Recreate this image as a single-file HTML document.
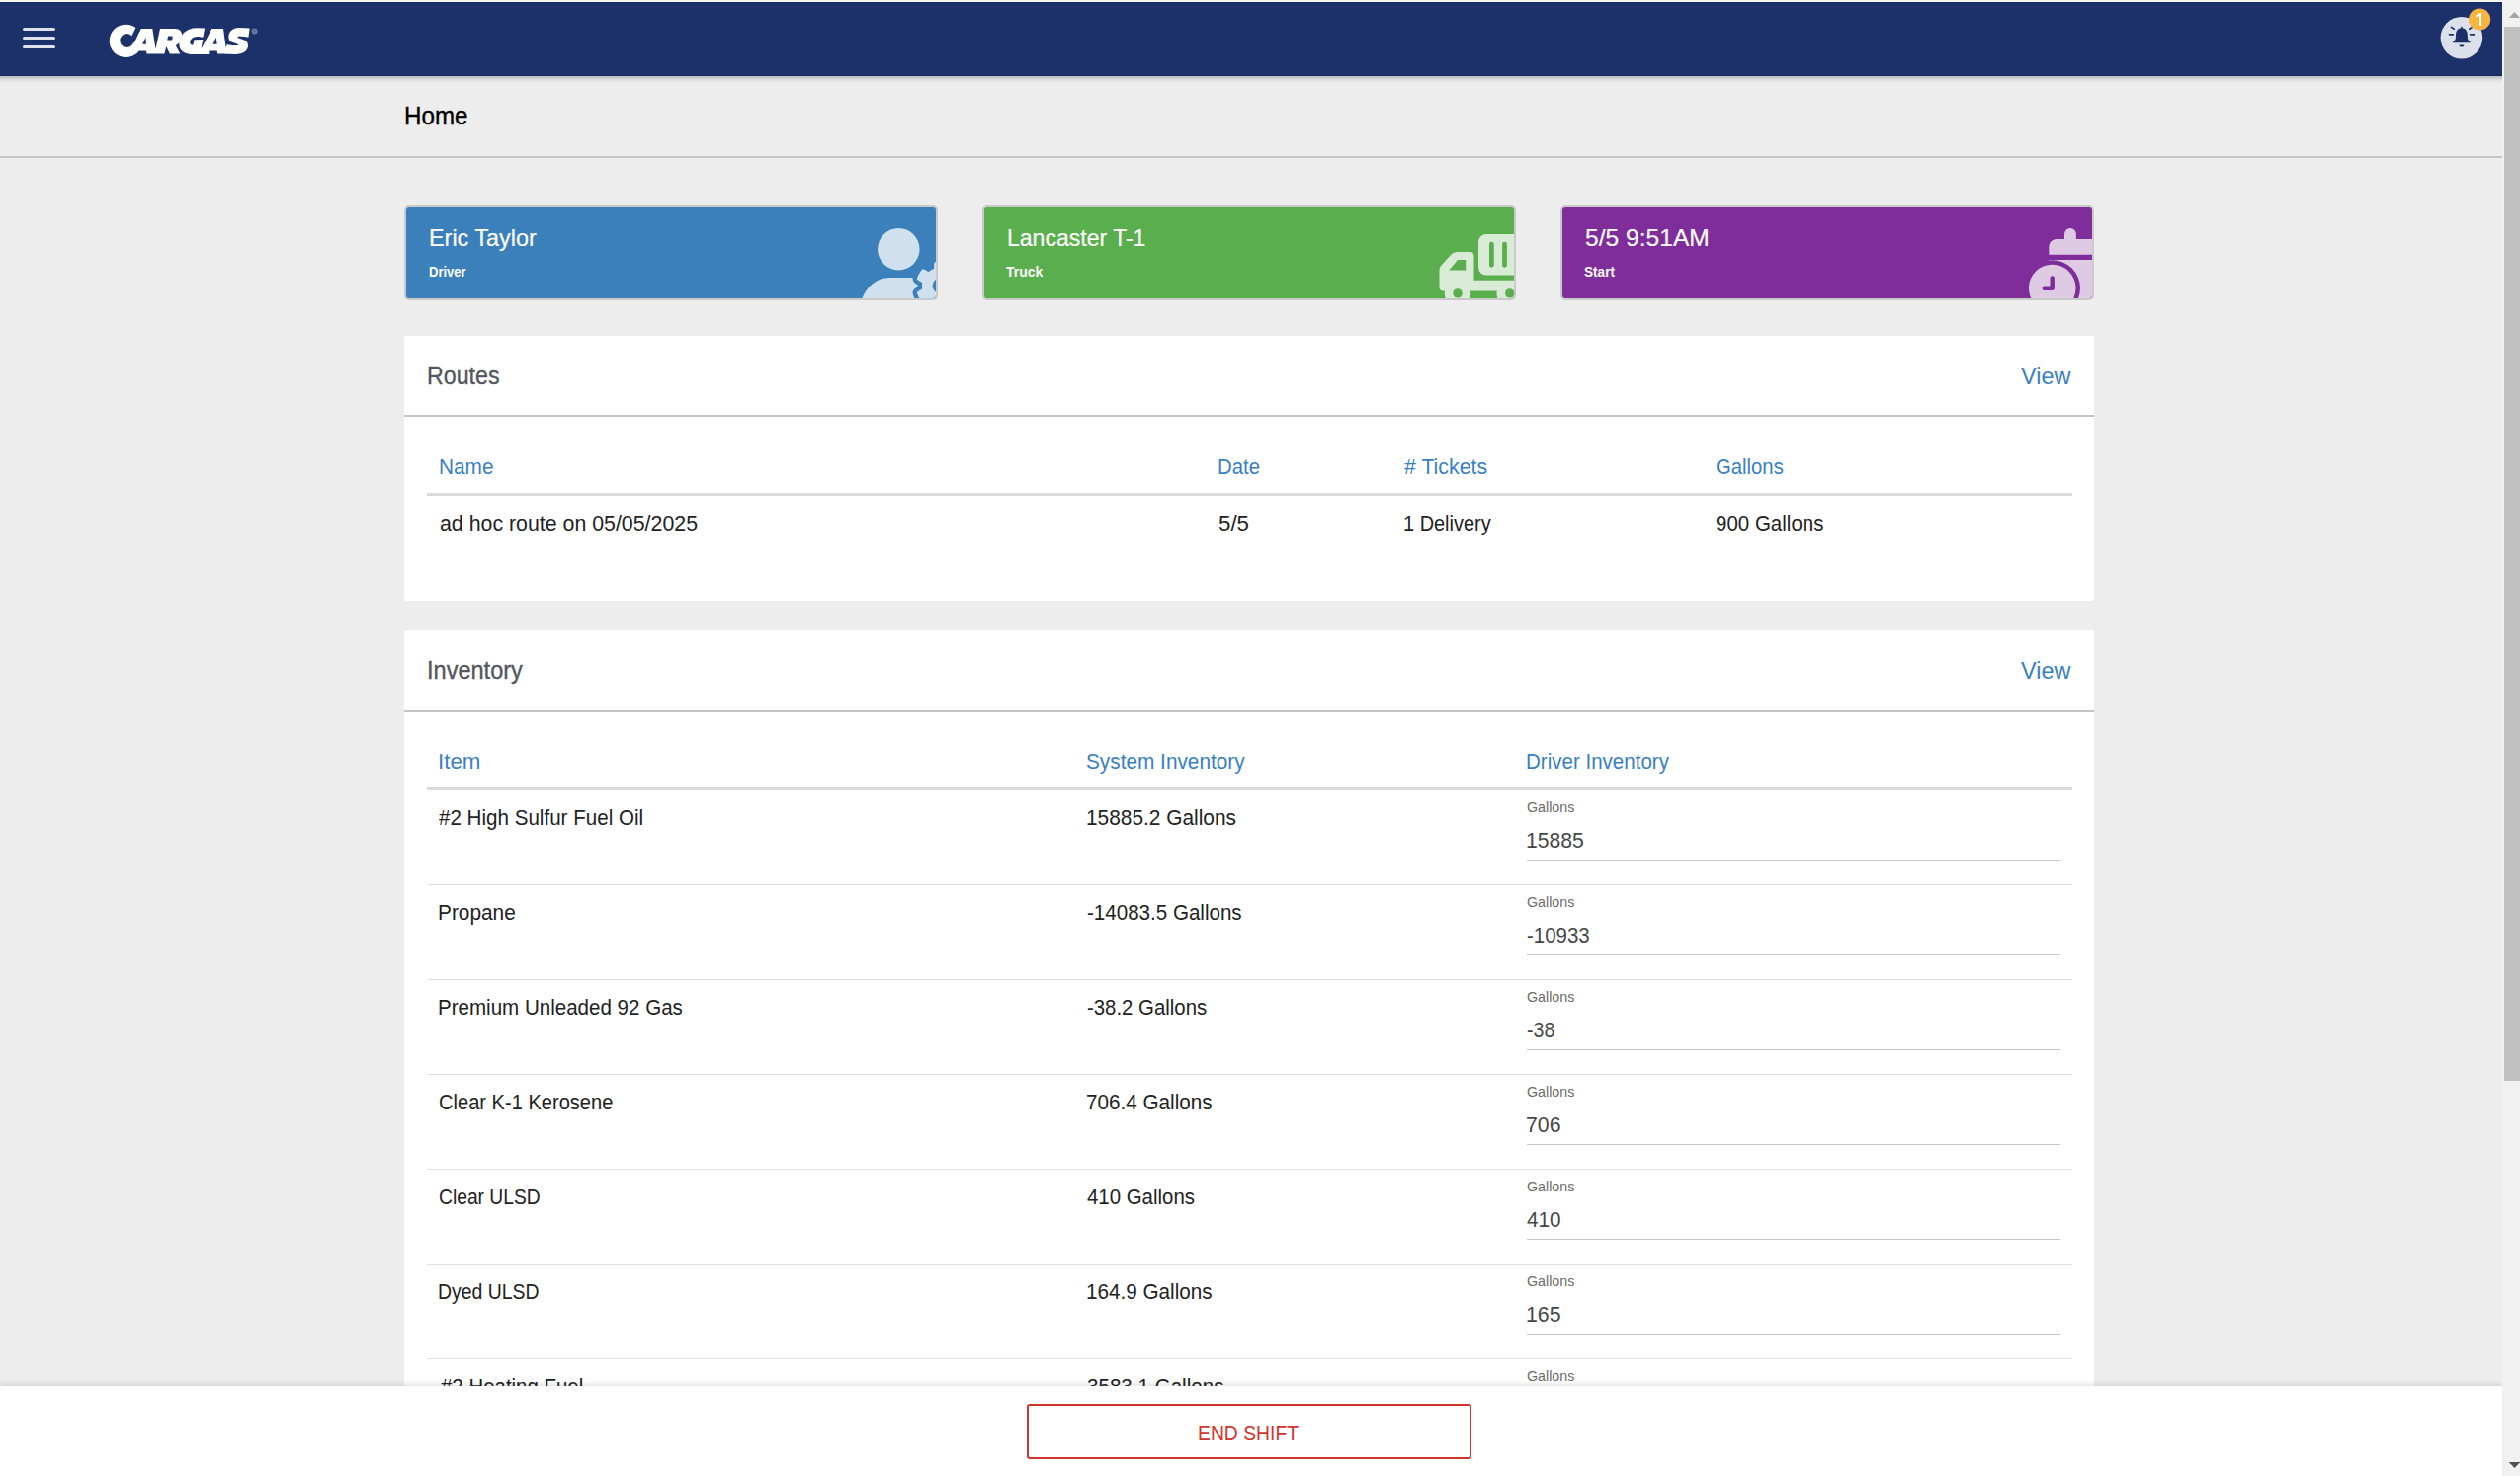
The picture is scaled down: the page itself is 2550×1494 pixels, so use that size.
<!DOCTYPE html>
<html><head><meta charset="utf-8"><title>Home</title>
<style>
html,body{margin:0;padding:0;width:2550px;height:1494px;overflow:hidden;}
body{background:#ededed;font-family:"Liberation Sans",sans-serif;}
#root{position:relative;width:2550px;height:1494px;overflow:hidden;background:#ededed;}
.a{position:absolute;}
.t{position:absolute;white-space:nowrap;line-height:1;transform-origin:0 0;}
.med{-webkit-text-stroke:0.35px currentColor;}
.lato{-webkit-text-stroke:0.2px currentColor;}
</style></head><body><div id="root">
<div class="a" style="left:-30px;top:2px;width:2592px;height:75px;background:#1c3169;box-shadow:0 2px 5px rgba(0,0,0,0.28);z-index:4"></div><div class="a" style="left:0;top:0;width:2532px;height:1px;background:#f2f2f2;z-index:6"></div><div class="a" style="left:0;top:1px;width:2532px;height:1px;background:#fefefe;z-index:6"></div><div class="a" style="left:0;top:2px;width:2532px;height:75px;background:#1c3169;z-index:5"><div class="a" style="left:0;top:0;width:2532px;height:1px;background:#132a66"></div><div class="a" style="left:0;top:74px;width:2532px;height:1px;background:#132a66"></div><div class="a" style="left:23px;top:26px;width:33px;height:3.4px;border-radius:2px;background:#dde1ea"></div><div class="a" style="left:23px;top:35px;width:33px;height:3.4px;border-radius:2px;background:#dde1ea"></div><div class="a" style="left:23px;top:44px;width:33px;height:3.4px;border-radius:2px;background:#dde1ea"></div><svg class="a" style="left:105px;top:16px" width="160" height="48" viewBox="105 18 160 48">
<g fill="#fff">
<circle cx="127.4" cy="41.4" r="16.7"/>
<path d="M135.6 44.1 L142.6 28.9 L154.3 28.9 L157.5 49.5 L162 28.9 L177 28.9 C182 29 184.2 32 184.2 36 C184.2 40.5 181.5 44 177.8 46 L182.3 54.6 L171.8 54.6 L168.3 47 L166.4 54.6 L148.6 54.6 L148 51.4 L139.7 51.4 Z"/>
<path d="M199 28.25 L207.1 28.6 L205.4 37.8 C203 37.2 201 37 199.5 37 C195 37 192.3 40 192.3 43 C192.3 44.8 193.3 45.7 195.2 45.7 L196.5 40.3 L205.4 40 L203.6 48.6 L212.5 49.5 L211.4 51.4 L211.4 54.9 L194 54.9 C186 54.9 181.3 50.5 181.3 44.5 C181.3 35 189 28.25 199 28.25 Z"/>
<path d="M203.5 49.8 L214.3 28.9 L226 28.9 L229.5 54.6 L220.3 54.6 L219.7 51.4 L211.4 51.4 Z"/>
<path d="M242 28.1 L252.7 28.6 L251.4 37.8 C248 36.8 244 36.6 241.3 36.8 C240 37 240 38 241.5 38.5 L246 40 C249.5 41.2 251 43 251 46 C251 51.5 246 54.9 238 54.9 L227.6 54.6 L228 49.5 L229.8 45 C233 46 237 46.2 240.6 46 C241.5 45.5 241 44.6 239.5 44.2 L235 42.8 C232.5 42 231.4 40.2 231.4 37.6 C231.4 31.5 236 28.1 242 28.1 Z"/>
</g>
<g fill="#1c3169">
<circle cx="128.3" cy="41.1" r="7"/>
<path d="M133.4 36.2 L137.8 27.3 L143 20 L142.6 28.9 L135.6 44.1 L134.8 41.5 Z"/>
<path d="M144.2 44.8 L147.4 37.8 L148 44.8 Z"/>
<path d="M170 36.5 L174 36.5 C175 36.5 175 38.8 173.8 40.6 L169.3 40.6 Z"/>
<path d="M215.6 44.8 L218.6 37.8 L219.7 44.8 Z"/>
</g>
<circle cx="257.6" cy="31.4" r="3" fill="#6a7aa3"/><circle cx="257.6" cy="31.4" r="1.3" fill="#56668f"/>
</svg><svg class="a" style="left:2460px;top:0px" width="72" height="75" viewBox="2460 2 72 75">
<circle cx="2490.9" cy="38.2" r="21.3" fill="#dbe0ea"/>
<path d="M2490.9 28.3 C2487.2 28.3 2485.2 31.2 2485 35 L2484.8 39 C2484.6 40 2484 40.8 2482.4 42 C2481.6 42.6 2482 43.3 2482.8 43.3 L2499 43.3 C2499.8 43.3 2500.2 42.6 2499.4 42 C2497.8 40.8 2497.2 40 2497 39 L2496.8 35 C2496.6 31.2 2494.6 28.3 2490.9 28.3 Z" fill="#1c3169"/>
<path d="M2488.4 45.4 h5 a2.5 2.2 0 0 1 -5 0z" fill="#1c3169"/>
<rect x="2490" y="26.8" width="1.8" height="2.6" rx="0.9" fill="#1c3169"/>
<g stroke="#1c3169" stroke-width="1.7" stroke-linecap="round">
<line x1="2478.5" y1="34.8" x2="2482.3" y2="34.8"/><line x1="2499.7" y1="34.8" x2="2503.5" y2="34.8"/>
<line x1="2480.4" y1="27.4" x2="2483.2" y2="29.2"/><line x1="2501.6" y1="27.4" x2="2498.8" y2="29.2"/>
</g>
<circle cx="2509.1" cy="19.5" r="11.1" fill="#f6b53e"/>
<path d="M2509.1 13.3 H2511 V25.9 H2509.1 V15.9 L2505.2 17.2 V15.5 Z" fill="#fff"/>
</svg></div><div class="a" style="left:2532px;top:0;width:18px;height:1494px;background:#f1f1f1;z-index:10"></div><div class="a" style="left:2534px;top:27px;width:16px;height:1067px;background:#c1c1c1;z-index:11"></div><svg class="a" style="left:2532px;top:0;z-index:12" width="18" height="1494" viewBox="2532 0 18 1494">
<path d="M2538.8 18 L2544.4 12 L2550 18 Z" fill="#a3a3a3"/>
<path d="M2538.7 1480 L2550.3 1480 L2544.5 1486 Z" fill="#505050"/>
</svg><div class="a" style="left:0;top:158px;width:2532px;height:2px;background:#c4c4c4"></div><div class="a" style="left:409px;top:208px;width:536px;height:92px;border:2px solid #c9c9c9;border-radius:5px;background:#3b80bb;overflow:hidden"><svg class="a" style="left:0;top:0" width="536" height="92" viewBox="411 210 536 92">
<circle cx="909.3" cy="252.2" r="21.2" fill="#cfe0ee"/>
<path d="M871 306 C875 292 886 281.1 900 281.1 L921 281.1 C930 281.1 935 290 935 306 Z" fill="#cfe0ee"/>
<path d="M969.80 289.25 L969.80 289.41 L969.80 289.57 L969.79 289.73 L969.79 289.89 L969.78 290.05 L969.77 290.21 L969.77 290.37 L969.76 290.53 L969.74 290.69 L969.73 290.85 L969.72 291.01 L969.70 291.17 L969.68 291.33 L969.66 291.49 L969.64 291.65 L969.62 291.81 L969.60 291.97 L969.57 292.13 L969.62 292.30 L969.78 292.49 L970.05 292.71 L970.41 292.95 L970.84 293.21 L971.32 293.48 L971.83 293.78 L972.35 294.09 L972.87 294.40 L973.37 294.73 L973.82 295.05 L974.23 295.37 L974.55 295.67 L974.79 295.96 L974.92 296.22 L974.93 296.44 L974.86 296.65 L974.80 296.85 L974.73 297.06 L974.66 297.26 L974.59 297.46 L974.52 297.66 L974.44 297.87 L974.37 298.07 L974.29 298.27 L974.21 298.47 L974.13 298.66 L974.04 298.86 L973.96 299.06 L973.87 299.26 L973.79 299.45 L973.70 299.65 L973.60 299.84 L973.51 300.03 L973.42 300.23 L973.32 300.42 L973.22 300.61 L973.12 300.80 L973.02 300.99 L972.92 301.18 L972.81 301.36 L972.70 301.55 L972.60 301.74 L972.49 301.92 L972.37 302.10 L972.26 302.29 L972.15 302.47 L972.03 302.65 L971.91 302.83 L971.79 303.01 L971.67 303.18 L971.55 303.36 L971.43 303.54 L971.30 303.71 L971.17 303.88 L971.05 304.05 L970.92 304.23 L970.79 304.40 L970.65 304.56 L970.52 304.73 L970.38 304.90 L970.24 305.06 L970.11 305.23 L969.97 305.39 L969.82 305.55 L969.68 305.71 L969.54 305.87 L969.39 306.03 L969.19 306.14 L968.90 306.15 L968.54 306.09 L968.11 305.96 L967.63 305.77 L967.13 305.53 L966.60 305.26 L966.06 304.97 L965.53 304.68 L965.02 304.38 L964.55 304.11 L964.11 303.87 L963.72 303.68 L963.40 303.55 L963.15 303.50 L962.98 303.55 L962.85 303.65 L962.73 303.75 L962.60 303.85 L962.47 303.94 L962.34 304.04 L962.22 304.14 L962.08 304.23 L961.95 304.32 L961.82 304.41 L961.69 304.50 L961.56 304.59 L961.42 304.68 L961.29 304.77 L961.15 304.85 L961.01 304.94 L960.88 305.02 L960.74 305.10 L960.60 305.18 L960.46 305.26 L960.32 305.34 L960.18 305.42 L960.04 305.50 L959.90 305.57 L959.75 305.64 L959.61 305.72 L959.47 305.79 L959.32 305.86 L959.18 305.93 L959.03 305.99 L958.88 306.06 L958.74 306.12 L958.59 306.19 L958.44 306.25 L958.29 306.31 L958.14 306.37 L957.99 306.43 L957.87 306.55 L957.78 306.79 L957.73 307.13 L957.71 307.56 L957.69 308.06 L957.69 308.62 L957.69 309.20 L957.69 309.81 L957.67 310.42 L957.64 311.01 L957.59 311.57 L957.52 312.08 L957.42 312.51 L957.29 312.86 L957.13 313.10 L956.93 313.22 L956.72 313.27 L956.51 313.31 L956.30 313.36 L956.09 313.40 L955.88 313.44 L955.67 313.48 L955.46 313.51 L955.25 313.55 L955.04 313.58 L954.82 313.61 L954.61 313.64 L954.40 313.67 L954.18 313.69 L953.97 313.72 L953.76 313.74 L953.54 313.76 L953.33 313.77 L953.12 313.79 L952.90 313.80 L952.69 313.82 L952.47 313.83 L952.26 313.84 L952.04 313.84 L951.83 313.85 L951.61 313.85 L951.40 313.85 L951.19 313.85 L950.97 313.85 L950.76 313.84 L950.54 313.84 L950.33 313.83 L950.11 313.82 L949.90 313.80 L949.68 313.79 L949.47 313.77 L949.26 313.76 L949.04 313.74 L948.83 313.72 L948.62 313.69 L948.40 313.67 L948.19 313.64 L947.98 313.61 L947.76 313.58 L947.55 313.55 L947.34 313.51 L947.13 313.48 L946.92 313.44 L946.71 313.40 L946.50 313.36 L946.29 313.31 L946.08 313.27 L945.87 313.22 L945.67 313.10 L945.51 312.86 L945.38 312.51 L945.28 312.08 L945.21 311.57 L945.16 311.01 L945.13 310.42 L945.11 309.81 L945.11 309.20 L945.11 308.62 L945.11 308.06 L945.09 307.56 L945.07 307.13 L945.02 306.79 L944.93 306.55 L944.81 306.43 L944.66 306.37 L944.51 306.31 L944.36 306.25 L944.21 306.19 L944.06 306.12 L943.92 306.06 L943.77 305.99 L943.62 305.93 L943.48 305.86 L943.33 305.79 L943.19 305.72 L943.05 305.64 L942.90 305.57 L942.76 305.50 L942.62 305.42 L942.48 305.34 L942.34 305.26 L942.20 305.18 L942.06 305.10 L941.92 305.02 L941.79 304.94 L941.65 304.85 L941.51 304.77 L941.38 304.68 L941.24 304.59 L941.11 304.50 L940.98 304.41 L940.85 304.32 L940.72 304.23 L940.58 304.14 L940.46 304.04 L940.33 303.94 L940.20 303.85 L940.07 303.75 L939.95 303.65 L939.82 303.55 L939.65 303.50 L939.40 303.55 L939.08 303.68 L938.69 303.87 L938.25 304.11 L937.78 304.38 L937.27 304.68 L936.74 304.97 L936.20 305.26 L935.67 305.53 L935.17 305.77 L934.69 305.96 L934.26 306.09 L933.90 306.15 L933.61 306.14 L933.41 306.03 L933.26 305.87 L933.12 305.71 L932.98 305.55 L932.83 305.39 L932.69 305.23 L932.56 305.06 L932.42 304.90 L932.28 304.73 L932.15 304.56 L932.01 304.40 L931.88 304.23 L931.75 304.05 L931.63 303.88 L931.50 303.71 L931.37 303.54 L931.25 303.36 L931.13 303.18 L931.01 303.01 L930.89 302.83 L930.77 302.65 L930.65 302.47 L930.54 302.29 L930.43 302.10 L930.31 301.92 L930.20 301.74 L930.10 301.55 L929.99 301.36 L929.88 301.18 L929.78 300.99 L929.68 300.80 L929.58 300.61 L929.48 300.42 L929.38 300.23 L929.29 300.03 L929.20 299.84 L929.10 299.65 L929.01 299.45 L928.93 299.26 L928.84 299.06 L928.76 298.86 L928.67 298.66 L928.59 298.47 L928.51 298.27 L928.43 298.07 L928.36 297.87 L928.28 297.66 L928.21 297.46 L928.14 297.26 L928.07 297.06 L928.00 296.85 L927.94 296.65 L927.87 296.44 L927.88 296.22 L928.01 295.96 L928.25 295.67 L928.57 295.37 L928.98 295.05 L929.43 294.73 L929.93 294.40 L930.45 294.09 L930.97 293.78 L931.48 293.48 L931.96 293.21 L932.39 292.95 L932.75 292.71 L933.02 292.49 L933.18 292.30 L933.23 292.13 L933.20 291.97 L933.18 291.81 L933.16 291.65 L933.14 291.49 L933.12 291.33 L933.10 291.17 L933.08 291.01 L933.07 290.85 L933.06 290.69 L933.04 290.53 L933.03 290.37 L933.03 290.21 L933.02 290.05 L933.01 289.89 L933.01 289.73 L933.00 289.57 L933.00 289.41 L933.00 289.25 L933.00 289.09 L933.00 288.93 L933.01 288.77 L933.01 288.61 L933.02 288.45 L933.03 288.29 L933.03 288.13 L933.04 287.97 L933.06 287.81 L933.07 287.65 L933.08 287.49 L933.10 287.33 L933.12 287.17 L933.14 287.01 L933.16 286.85 L933.18 286.69 L933.20 286.53 L933.23 286.37 L933.18 286.20 L933.02 286.01 L932.75 285.79 L932.39 285.55 L931.96 285.29 L931.48 285.02 L930.97 284.72 L930.45 284.41 L929.93 284.10 L929.43 283.77 L928.98 283.45 L928.57 283.13 L928.25 282.83 L928.01 282.54 L927.88 282.28 L927.87 282.06 L927.94 281.85 L928.00 281.65 L928.07 281.44 L928.14 281.24 L928.21 281.04 L928.28 280.84 L928.36 280.63 L928.43 280.43 L928.51 280.23 L928.59 280.03 L928.67 279.84 L928.76 279.64 L928.84 279.44 L928.93 279.24 L929.01 279.05 L929.10 278.85 L929.20 278.66 L929.29 278.47 L929.38 278.27 L929.48 278.08 L929.58 277.89 L929.68 277.70 L929.78 277.51 L929.88 277.32 L929.99 277.14 L930.10 276.95 L930.20 276.76 L930.31 276.58 L930.43 276.40 L930.54 276.21 L930.65 276.03 L930.77 275.85 L930.89 275.67 L931.01 275.49 L931.13 275.32 L931.25 275.14 L931.37 274.96 L931.50 274.79 L931.63 274.62 L931.75 274.45 L931.88 274.27 L932.01 274.10 L932.15 273.94 L932.28 273.77 L932.42 273.60 L932.56 273.44 L932.69 273.27 L932.83 273.11 L932.98 272.95 L933.12 272.79 L933.26 272.63 L933.41 272.47 L933.61 272.36 L933.90 272.35 L934.26 272.41 L934.69 272.54 L935.17 272.73 L935.67 272.97 L936.20 273.24 L936.74 273.53 L937.27 273.82 L937.78 274.12 L938.25 274.39 L938.69 274.63 L939.08 274.82 L939.40 274.95 L939.65 275.00 L939.82 274.95 L939.95 274.85 L940.07 274.75 L940.20 274.65 L940.33 274.56 L940.46 274.46 L940.58 274.36 L940.72 274.27 L940.85 274.18 L940.98 274.09 L941.11 274.00 L941.24 273.91 L941.38 273.82 L941.51 273.73 L941.65 273.65 L941.79 273.56 L941.92 273.48 L942.06 273.40 L942.20 273.32 L942.34 273.24 L942.48 273.16 L942.62 273.08 L942.76 273.00 L942.90 272.93 L943.05 272.86 L943.19 272.78 L943.33 272.71 L943.48 272.64 L943.62 272.57 L943.77 272.51 L943.92 272.44 L944.06 272.38 L944.21 272.31 L944.36 272.25 L944.51 272.19 L944.66 272.13 L944.81 272.07 L944.93 271.95 L945.02 271.71 L945.07 271.37 L945.09 270.94 L945.11 270.44 L945.11 269.88 L945.11 269.30 L945.11 268.69 L945.13 268.08 L945.16 267.49 L945.21 266.93 L945.28 266.42 L945.38 265.99 L945.51 265.64 L945.67 265.40 L945.87 265.28 L946.08 265.23 L946.29 265.19 L946.50 265.14 L946.71 265.10 L946.92 265.06 L947.13 265.02 L947.34 264.99 L947.55 264.95 L947.76 264.92 L947.98 264.89 L948.19 264.86 L948.40 264.83 L948.62 264.81 L948.83 264.78 L949.04 264.76 L949.26 264.74 L949.47 264.73 L949.68 264.71 L949.90 264.70 L950.11 264.68 L950.33 264.67 L950.54 264.66 L950.76 264.66 L950.97 264.65 L951.19 264.65 L951.40 264.65 L951.61 264.65 L951.83 264.65 L952.04 264.66 L952.26 264.66 L952.47 264.67 L952.69 264.68 L952.90 264.70 L953.12 264.71 L953.33 264.73 L953.54 264.74 L953.76 264.76 L953.97 264.78 L954.18 264.81 L954.40 264.83 L954.61 264.86 L954.82 264.89 L955.04 264.92 L955.25 264.95 L955.46 264.99 L955.67 265.02 L955.88 265.06 L956.09 265.10 L956.30 265.14 L956.51 265.19 L956.72 265.23 L956.93 265.28 L957.13 265.40 L957.29 265.64 L957.42 265.99 L957.52 266.42 L957.59 266.93 L957.64 267.49 L957.67 268.08 L957.69 268.69 L957.69 269.30 L957.69 269.88 L957.69 270.44 L957.71 270.94 L957.73 271.37 L957.78 271.71 L957.87 271.95 L957.99 272.07 L958.14 272.13 L958.29 272.19 L958.44 272.25 L958.59 272.31 L958.74 272.38 L958.88 272.44 L959.03 272.51 L959.18 272.57 L959.32 272.64 L959.47 272.71 L959.61 272.78 L959.75 272.86 L959.90 272.93 L960.04 273.00 L960.18 273.08 L960.32 273.16 L960.46 273.24 L960.60 273.32 L960.74 273.40 L960.88 273.48 L961.01 273.56 L961.15 273.65 L961.29 273.73 L961.42 273.82 L961.56 273.91 L961.69 274.00 L961.82 274.09 L961.95 274.18 L962.08 274.27 L962.22 274.36 L962.34 274.46 L962.47 274.56 L962.60 274.65 L962.73 274.75 L962.85 274.85 L962.98 274.95 L963.15 275.00 L963.40 274.95 L963.72 274.82 L964.11 274.63 L964.55 274.39 L965.02 274.12 L965.53 273.82 L966.06 273.53 L966.60 273.24 L967.13 272.97 L967.63 272.73 L968.11 272.54 L968.54 272.41 L968.90 272.35 L969.19 272.36 L969.39 272.47 L969.54 272.63 L969.68 272.79 L969.82 272.95 L969.97 273.11 L970.11 273.27 L970.24 273.44 L970.38 273.60 L970.52 273.77 L970.65 273.94 L970.79 274.10 L970.92 274.27 L971.05 274.45 L971.17 274.62 L971.30 274.79 L971.43 274.96 L971.55 275.14 L971.67 275.32 L971.79 275.49 L971.91 275.67 L972.03 275.85 L972.15 276.03 L972.26 276.21 L972.37 276.40 L972.49 276.58 L972.60 276.76 L972.70 276.95 L972.81 277.14 L972.92 277.32 L973.02 277.51 L973.12 277.70 L973.22 277.89 L973.32 278.08 L973.42 278.27 L973.51 278.47 L973.60 278.66 L973.70 278.85 L973.79 279.05 L973.87 279.24 L973.96 279.44 L974.04 279.64 L974.13 279.84 L974.21 280.03 L974.29 280.23 L974.37 280.43 L974.44 280.63 L974.52 280.84 L974.59 281.04 L974.66 281.24 L974.73 281.44 L974.80 281.65 L974.86 281.85 L974.93 282.06 L974.92 282.28 L974.79 282.54 L974.55 282.83 L974.23 283.13 L973.82 283.45 L973.37 283.77 L972.87 284.10 L972.35 284.41 L971.83 284.72 L971.32 285.02 L970.84 285.29 L970.41 285.55 L970.05 285.79 L969.78 286.01 L969.62 286.20 L969.57 286.37 L969.60 286.53 L969.62 286.69 L969.64 286.85 L969.66 287.01 L969.68 287.17 L969.70 287.33 L969.72 287.49 L969.73 287.65 L969.74 287.81 L969.76 287.97 L969.77 288.13 L969.77 288.29 L969.78 288.45 L969.79 288.61 L969.79 288.77 L969.80 288.93 L969.80 289.09 Z" fill="#3b80bb" stroke="#3b80bb" stroke-width="8.6" stroke-linejoin="round"/>
<path d="M969.80 289.25 L969.80 289.41 L969.80 289.57 L969.79 289.73 L969.79 289.89 L969.78 290.05 L969.77 290.21 L969.77 290.37 L969.76 290.53 L969.74 290.69 L969.73 290.85 L969.72 291.01 L969.70 291.17 L969.68 291.33 L969.66 291.49 L969.64 291.65 L969.62 291.81 L969.60 291.97 L969.57 292.13 L969.62 292.30 L969.78 292.49 L970.05 292.71 L970.41 292.95 L970.84 293.21 L971.32 293.48 L971.83 293.78 L972.35 294.09 L972.87 294.40 L973.37 294.73 L973.82 295.05 L974.23 295.37 L974.55 295.67 L974.79 295.96 L974.92 296.22 L974.93 296.44 L974.86 296.65 L974.80 296.85 L974.73 297.06 L974.66 297.26 L974.59 297.46 L974.52 297.66 L974.44 297.87 L974.37 298.07 L974.29 298.27 L974.21 298.47 L974.13 298.66 L974.04 298.86 L973.96 299.06 L973.87 299.26 L973.79 299.45 L973.70 299.65 L973.60 299.84 L973.51 300.03 L973.42 300.23 L973.32 300.42 L973.22 300.61 L973.12 300.80 L973.02 300.99 L972.92 301.18 L972.81 301.36 L972.70 301.55 L972.60 301.74 L972.49 301.92 L972.37 302.10 L972.26 302.29 L972.15 302.47 L972.03 302.65 L971.91 302.83 L971.79 303.01 L971.67 303.18 L971.55 303.36 L971.43 303.54 L971.30 303.71 L971.17 303.88 L971.05 304.05 L970.92 304.23 L970.79 304.40 L970.65 304.56 L970.52 304.73 L970.38 304.90 L970.24 305.06 L970.11 305.23 L969.97 305.39 L969.82 305.55 L969.68 305.71 L969.54 305.87 L969.39 306.03 L969.19 306.14 L968.90 306.15 L968.54 306.09 L968.11 305.96 L967.63 305.77 L967.13 305.53 L966.60 305.26 L966.06 304.97 L965.53 304.68 L965.02 304.38 L964.55 304.11 L964.11 303.87 L963.72 303.68 L963.40 303.55 L963.15 303.50 L962.98 303.55 L962.85 303.65 L962.73 303.75 L962.60 303.85 L962.47 303.94 L962.34 304.04 L962.22 304.14 L962.08 304.23 L961.95 304.32 L961.82 304.41 L961.69 304.50 L961.56 304.59 L961.42 304.68 L961.29 304.77 L961.15 304.85 L961.01 304.94 L960.88 305.02 L960.74 305.10 L960.60 305.18 L960.46 305.26 L960.32 305.34 L960.18 305.42 L960.04 305.50 L959.90 305.57 L959.75 305.64 L959.61 305.72 L959.47 305.79 L959.32 305.86 L959.18 305.93 L959.03 305.99 L958.88 306.06 L958.74 306.12 L958.59 306.19 L958.44 306.25 L958.29 306.31 L958.14 306.37 L957.99 306.43 L957.87 306.55 L957.78 306.79 L957.73 307.13 L957.71 307.56 L957.69 308.06 L957.69 308.62 L957.69 309.20 L957.69 309.81 L957.67 310.42 L957.64 311.01 L957.59 311.57 L957.52 312.08 L957.42 312.51 L957.29 312.86 L957.13 313.10 L956.93 313.22 L956.72 313.27 L956.51 313.31 L956.30 313.36 L956.09 313.40 L955.88 313.44 L955.67 313.48 L955.46 313.51 L955.25 313.55 L955.04 313.58 L954.82 313.61 L954.61 313.64 L954.40 313.67 L954.18 313.69 L953.97 313.72 L953.76 313.74 L953.54 313.76 L953.33 313.77 L953.12 313.79 L952.90 313.80 L952.69 313.82 L952.47 313.83 L952.26 313.84 L952.04 313.84 L951.83 313.85 L951.61 313.85 L951.40 313.85 L951.19 313.85 L950.97 313.85 L950.76 313.84 L950.54 313.84 L950.33 313.83 L950.11 313.82 L949.90 313.80 L949.68 313.79 L949.47 313.77 L949.26 313.76 L949.04 313.74 L948.83 313.72 L948.62 313.69 L948.40 313.67 L948.19 313.64 L947.98 313.61 L947.76 313.58 L947.55 313.55 L947.34 313.51 L947.13 313.48 L946.92 313.44 L946.71 313.40 L946.50 313.36 L946.29 313.31 L946.08 313.27 L945.87 313.22 L945.67 313.10 L945.51 312.86 L945.38 312.51 L945.28 312.08 L945.21 311.57 L945.16 311.01 L945.13 310.42 L945.11 309.81 L945.11 309.20 L945.11 308.62 L945.11 308.06 L945.09 307.56 L945.07 307.13 L945.02 306.79 L944.93 306.55 L944.81 306.43 L944.66 306.37 L944.51 306.31 L944.36 306.25 L944.21 306.19 L944.06 306.12 L943.92 306.06 L943.77 305.99 L943.62 305.93 L943.48 305.86 L943.33 305.79 L943.19 305.72 L943.05 305.64 L942.90 305.57 L942.76 305.50 L942.62 305.42 L942.48 305.34 L942.34 305.26 L942.20 305.18 L942.06 305.10 L941.92 305.02 L941.79 304.94 L941.65 304.85 L941.51 304.77 L941.38 304.68 L941.24 304.59 L941.11 304.50 L940.98 304.41 L940.85 304.32 L940.72 304.23 L940.58 304.14 L940.46 304.04 L940.33 303.94 L940.20 303.85 L940.07 303.75 L939.95 303.65 L939.82 303.55 L939.65 303.50 L939.40 303.55 L939.08 303.68 L938.69 303.87 L938.25 304.11 L937.78 304.38 L937.27 304.68 L936.74 304.97 L936.20 305.26 L935.67 305.53 L935.17 305.77 L934.69 305.96 L934.26 306.09 L933.90 306.15 L933.61 306.14 L933.41 306.03 L933.26 305.87 L933.12 305.71 L932.98 305.55 L932.83 305.39 L932.69 305.23 L932.56 305.06 L932.42 304.90 L932.28 304.73 L932.15 304.56 L932.01 304.40 L931.88 304.23 L931.75 304.05 L931.63 303.88 L931.50 303.71 L931.37 303.54 L931.25 303.36 L931.13 303.18 L931.01 303.01 L930.89 302.83 L930.77 302.65 L930.65 302.47 L930.54 302.29 L930.43 302.10 L930.31 301.92 L930.20 301.74 L930.10 301.55 L929.99 301.36 L929.88 301.18 L929.78 300.99 L929.68 300.80 L929.58 300.61 L929.48 300.42 L929.38 300.23 L929.29 300.03 L929.20 299.84 L929.10 299.65 L929.01 299.45 L928.93 299.26 L928.84 299.06 L928.76 298.86 L928.67 298.66 L928.59 298.47 L928.51 298.27 L928.43 298.07 L928.36 297.87 L928.28 297.66 L928.21 297.46 L928.14 297.26 L928.07 297.06 L928.00 296.85 L927.94 296.65 L927.87 296.44 L927.88 296.22 L928.01 295.96 L928.25 295.67 L928.57 295.37 L928.98 295.05 L929.43 294.73 L929.93 294.40 L930.45 294.09 L930.97 293.78 L931.48 293.48 L931.96 293.21 L932.39 292.95 L932.75 292.71 L933.02 292.49 L933.18 292.30 L933.23 292.13 L933.20 291.97 L933.18 291.81 L933.16 291.65 L933.14 291.49 L933.12 291.33 L933.10 291.17 L933.08 291.01 L933.07 290.85 L933.06 290.69 L933.04 290.53 L933.03 290.37 L933.03 290.21 L933.02 290.05 L933.01 289.89 L933.01 289.73 L933.00 289.57 L933.00 289.41 L933.00 289.25 L933.00 289.09 L933.00 288.93 L933.01 288.77 L933.01 288.61 L933.02 288.45 L933.03 288.29 L933.03 288.13 L933.04 287.97 L933.06 287.81 L933.07 287.65 L933.08 287.49 L933.10 287.33 L933.12 287.17 L933.14 287.01 L933.16 286.85 L933.18 286.69 L933.20 286.53 L933.23 286.37 L933.18 286.20 L933.02 286.01 L932.75 285.79 L932.39 285.55 L931.96 285.29 L931.48 285.02 L930.97 284.72 L930.45 284.41 L929.93 284.10 L929.43 283.77 L928.98 283.45 L928.57 283.13 L928.25 282.83 L928.01 282.54 L927.88 282.28 L927.87 282.06 L927.94 281.85 L928.00 281.65 L928.07 281.44 L928.14 281.24 L928.21 281.04 L928.28 280.84 L928.36 280.63 L928.43 280.43 L928.51 280.23 L928.59 280.03 L928.67 279.84 L928.76 279.64 L928.84 279.44 L928.93 279.24 L929.01 279.05 L929.10 278.85 L929.20 278.66 L929.29 278.47 L929.38 278.27 L929.48 278.08 L929.58 277.89 L929.68 277.70 L929.78 277.51 L929.88 277.32 L929.99 277.14 L930.10 276.95 L930.20 276.76 L930.31 276.58 L930.43 276.40 L930.54 276.21 L930.65 276.03 L930.77 275.85 L930.89 275.67 L931.01 275.49 L931.13 275.32 L931.25 275.14 L931.37 274.96 L931.50 274.79 L931.63 274.62 L931.75 274.45 L931.88 274.27 L932.01 274.10 L932.15 273.94 L932.28 273.77 L932.42 273.60 L932.56 273.44 L932.69 273.27 L932.83 273.11 L932.98 272.95 L933.12 272.79 L933.26 272.63 L933.41 272.47 L933.61 272.36 L933.90 272.35 L934.26 272.41 L934.69 272.54 L935.17 272.73 L935.67 272.97 L936.20 273.24 L936.74 273.53 L937.27 273.82 L937.78 274.12 L938.25 274.39 L938.69 274.63 L939.08 274.82 L939.40 274.95 L939.65 275.00 L939.82 274.95 L939.95 274.85 L940.07 274.75 L940.20 274.65 L940.33 274.56 L940.46 274.46 L940.58 274.36 L940.72 274.27 L940.85 274.18 L940.98 274.09 L941.11 274.00 L941.24 273.91 L941.38 273.82 L941.51 273.73 L941.65 273.65 L941.79 273.56 L941.92 273.48 L942.06 273.40 L942.20 273.32 L942.34 273.24 L942.48 273.16 L942.62 273.08 L942.76 273.00 L942.90 272.93 L943.05 272.86 L943.19 272.78 L943.33 272.71 L943.48 272.64 L943.62 272.57 L943.77 272.51 L943.92 272.44 L944.06 272.38 L944.21 272.31 L944.36 272.25 L944.51 272.19 L944.66 272.13 L944.81 272.07 L944.93 271.95 L945.02 271.71 L945.07 271.37 L945.09 270.94 L945.11 270.44 L945.11 269.88 L945.11 269.30 L945.11 268.69 L945.13 268.08 L945.16 267.49 L945.21 266.93 L945.28 266.42 L945.38 265.99 L945.51 265.64 L945.67 265.40 L945.87 265.28 L946.08 265.23 L946.29 265.19 L946.50 265.14 L946.71 265.10 L946.92 265.06 L947.13 265.02 L947.34 264.99 L947.55 264.95 L947.76 264.92 L947.98 264.89 L948.19 264.86 L948.40 264.83 L948.62 264.81 L948.83 264.78 L949.04 264.76 L949.26 264.74 L949.47 264.73 L949.68 264.71 L949.90 264.70 L950.11 264.68 L950.33 264.67 L950.54 264.66 L950.76 264.66 L950.97 264.65 L951.19 264.65 L951.40 264.65 L951.61 264.65 L951.83 264.65 L952.04 264.66 L952.26 264.66 L952.47 264.67 L952.69 264.68 L952.90 264.70 L953.12 264.71 L953.33 264.73 L953.54 264.74 L953.76 264.76 L953.97 264.78 L954.18 264.81 L954.40 264.83 L954.61 264.86 L954.82 264.89 L955.04 264.92 L955.25 264.95 L955.46 264.99 L955.67 265.02 L955.88 265.06 L956.09 265.10 L956.30 265.14 L956.51 265.19 L956.72 265.23 L956.93 265.28 L957.13 265.40 L957.29 265.64 L957.42 265.99 L957.52 266.42 L957.59 266.93 L957.64 267.49 L957.67 268.08 L957.69 268.69 L957.69 269.30 L957.69 269.88 L957.69 270.44 L957.71 270.94 L957.73 271.37 L957.78 271.71 L957.87 271.95 L957.99 272.07 L958.14 272.13 L958.29 272.19 L958.44 272.25 L958.59 272.31 L958.74 272.38 L958.88 272.44 L959.03 272.51 L959.18 272.57 L959.32 272.64 L959.47 272.71 L959.61 272.78 L959.75 272.86 L959.90 272.93 L960.04 273.00 L960.18 273.08 L960.32 273.16 L960.46 273.24 L960.60 273.32 L960.74 273.40 L960.88 273.48 L961.01 273.56 L961.15 273.65 L961.29 273.73 L961.42 273.82 L961.56 273.91 L961.69 274.00 L961.82 274.09 L961.95 274.18 L962.08 274.27 L962.22 274.36 L962.34 274.46 L962.47 274.56 L962.60 274.65 L962.73 274.75 L962.85 274.85 L962.98 274.95 L963.15 275.00 L963.40 274.95 L963.72 274.82 L964.11 274.63 L964.55 274.39 L965.02 274.12 L965.53 273.82 L966.06 273.53 L966.60 273.24 L967.13 272.97 L967.63 272.73 L968.11 272.54 L968.54 272.41 L968.90 272.35 L969.19 272.36 L969.39 272.47 L969.54 272.63 L969.68 272.79 L969.82 272.95 L969.97 273.11 L970.11 273.27 L970.24 273.44 L970.38 273.60 L970.52 273.77 L970.65 273.94 L970.79 274.10 L970.92 274.27 L971.05 274.45 L971.17 274.62 L971.30 274.79 L971.43 274.96 L971.55 275.14 L971.67 275.32 L971.79 275.49 L971.91 275.67 L972.03 275.85 L972.15 276.03 L972.26 276.21 L972.37 276.40 L972.49 276.58 L972.60 276.76 L972.70 276.95 L972.81 277.14 L972.92 277.32 L973.02 277.51 L973.12 277.70 L973.22 277.89 L973.32 278.08 L973.42 278.27 L973.51 278.47 L973.60 278.66 L973.70 278.85 L973.79 279.05 L973.87 279.24 L973.96 279.44 L974.04 279.64 L974.13 279.84 L974.21 280.03 L974.29 280.23 L974.37 280.43 L974.44 280.63 L974.52 280.84 L974.59 281.04 L974.66 281.24 L974.73 281.44 L974.80 281.65 L974.86 281.85 L974.93 282.06 L974.92 282.28 L974.79 282.54 L974.55 282.83 L974.23 283.13 L973.82 283.45 L973.37 283.77 L972.87 284.10 L972.35 284.41 L971.83 284.72 L971.32 285.02 L970.84 285.29 L970.41 285.55 L970.05 285.79 L969.78 286.01 L969.62 286.20 L969.57 286.37 L969.60 286.53 L969.62 286.69 L969.64 286.85 L969.66 287.01 L969.68 287.17 L969.70 287.33 L969.72 287.49 L969.73 287.65 L969.74 287.81 L969.76 287.97 L969.77 288.13 L969.77 288.29 L969.78 288.45 L969.79 288.61 L969.79 288.77 L969.80 288.93 L969.80 289.09 Z" fill="#cfe0ee"/>
<circle cx="951.4" cy="289.25" r="7.8" fill="#3b80bb"/>
</svg></div><div class="a" style="left:994px;top:208px;width:536px;height:92px;border:2px solid #c9c9c9;border-radius:5px;background:#5bae4e;overflow:hidden"><svg class="a" style="left:0;top:0" width="536" height="92" viewBox="996 210 536 92">
<path d="M1496 245 a8 8 0 0 1 8 -8 h40 v41.6 h-40 a8 8 0 0 1 -8 -8z" fill="#d8ebd5"/>
<rect x="1507" y="244.7" width="4.8" height="26" rx="2.4" fill="#5bae4e"/>
<rect x="1520.1" y="244.7" width="4.8" height="26" rx="2.4" fill="#5bae4e"/>
<path d="M1460.5 294.6 a4 4 0 0 1 -4 -4 V273 a6 6 0 0 1 1.6 -4 L1468 258 a9 9 0 0 1 6.5 -2.9 h13 a4 4 0 0 1 4 4 V283.8 H1540 V294.6 Z" fill="#d8ebd5"/>
<path d="M1466.2 273.4 L1475.1 263 H1483.2 V273.4 Z" fill="#5bae4e"/>
<circle cx="1475" cy="296.9" r="13.2" fill="#d8ebd5"/>
<circle cx="1475" cy="296.9" r="4.7" fill="#5bae4e"/>
<circle cx="1527.7" cy="296.9" r="13.2" fill="#d8ebd5"/>
<circle cx="1527.7" cy="296.9" r="4.7" fill="#5bae4e"/>
</svg></div><div class="a" style="left:1579px;top:208px;width:536px;height:92px;border:2px solid #c9c9c9;border-radius:5px;background:#7f2d9a;overflow:hidden"><svg class="a" style="left:0;top:0" width="536" height="92" viewBox="1581 210 536 92">
<path d="M2073.3 250 a8 8 0 0 1 8 -8 h40 v15.7 h-48z" fill="#dfcae4"/>
<rect x="2089" y="230.9" width="11.9" height="18" rx="5.95" fill="#dfcae4"/>
<rect x="2073.3" y="263" width="50" height="40" fill="#dfcae4"/>
<circle cx="2076.7" cy="291.6" r="28.3" fill="#7f2d9a"/>
<circle cx="2076.7" cy="291.6" r="23.8" fill="#dfcae4"/>
<path d="M2076.7 281.5 V291.7 H2068.8" fill="none" stroke="#7f2d9a" stroke-width="4.5" stroke-linecap="round" stroke-linejoin="round"/>
</svg></div><div class="a" style="left:409px;top:340px;width:1710px;height:268px;background:#fff;border-radius:3px"></div><div class="a" style="left:409px;top:420px;width:1710px;height:2px;background:#c4c4c4"></div><div class="a" style="left:432px;top:499px;width:1665px;height:3px;background:#dadada"></div><div class="a" style="left:409px;top:638px;width:1710px;height:900px;background:#fff;border-radius:3px"></div><div class="a" style="left:409px;top:719px;width:1710px;height:2px;background:#c4c4c4"></div><div class="a" style="left:432px;top:797px;width:1665px;height:3px;background:#dadada"></div><div class="a" style="left:1545px;top:870px;width:540px;height:1px;background:#c8c8c8"></div><div class="a" style="left:432px;top:895px;width:1665px;height:1px;background:#e0e0e0"></div><div class="a" style="left:1545px;top:966px;width:540px;height:1px;background:#c8c8c8"></div><div class="a" style="left:432px;top:991px;width:1665px;height:1px;background:#e0e0e0"></div><div class="a" style="left:1545px;top:1062px;width:540px;height:1px;background:#c8c8c8"></div><div class="a" style="left:432px;top:1087px;width:1665px;height:1px;background:#e0e0e0"></div><div class="a" style="left:1545px;top:1158px;width:540px;height:1px;background:#c8c8c8"></div><div class="a" style="left:432px;top:1183px;width:1665px;height:1px;background:#e0e0e0"></div><div class="a" style="left:1545px;top:1254px;width:540px;height:1px;background:#c8c8c8"></div><div class="a" style="left:432px;top:1279px;width:1665px;height:1px;background:#e0e0e0"></div><div class="a" style="left:1545px;top:1350px;width:540px;height:1px;background:#c8c8c8"></div><div class="a" style="left:432px;top:1375px;width:1665px;height:1px;background:#e0e0e0"></div><div class="a" style="left:1545px;top:1446px;width:540px;height:1px;background:#c8c8c8"></div><div class="a" style="left:432px;top:1471px;width:1665px;height:1px;background:#e0e0e0"></div><div class="t med" style="left:409.43px;top:105px;font-size:25px;color:#000;transform:scaleX(0.9662);">Home</div>
<div class="t lato" style="left:433.63px;top:229px;font-size:24px;color:#fff;transform:scaleX(0.9748);">Eric Taylor</div>
<div class="t" style="left:433.90px;top:267px;font-size:15px;color:#fff;font-weight:700;transform:scaleX(0.8659);">Driver</div>
<div class="t lato" style="left:1018.64px;top:229px;font-size:24px;color:#fff;transform:scaleX(0.9597);">Lancaster T-1</div>
<div class="t" style="left:1018.30px;top:267px;font-size:15px;color:#fff;font-weight:700;transform:scaleX(0.9275);">Truck</div>
<div class="t lato" style="left:1604.20px;top:229px;font-size:24px;color:#fff;transform:scaleX(1.0246);">5/5 9:51AM</div>
<div class="t" style="left:1603.30px;top:267px;font-size:15px;color:#fff;font-weight:700;transform:scaleX(0.9057);">Start</div>
<div class="t med" style="left:432.07px;top:368px;font-size:25px;color:#52575c;transform:scaleX(0.9282);">Routes</div>
<div class="t" style="left:2045.10px;top:370px;font-size:23.5px;color:#3a7fc0;transform:scaleX(0.9961);">View</div>
<div class="t med" style="left:431.86px;top:666px;font-size:25px;color:#52575c;transform:scaleX(0.9422);">Inventory</div>
<div class="t" style="left:2045.10px;top:668px;font-size:23.5px;color:#3a7fc0;transform:scaleX(0.9961);">View</div>
<div class="t" style="left:443.93px;top:463px;font-size:21.5px;color:#3a7fc0;transform:scaleX(0.9679);">Name</div>
<div class="t" style="left:1232.35px;top:463px;font-size:21.5px;color:#3a7fc0;transform:scaleX(0.9477);">Date</div>
<div class="t" style="left:1420.80px;top:463px;font-size:21.5px;color:#3a7fc0;transform:scaleX(0.9906);"># Tickets</div>
<div class="t" style="left:1736.10px;top:463px;font-size:21.5px;color:#3a7fc0;transform:scaleX(0.9438);">Gallons</div>
<div class="t" style="left:444.60px;top:520px;font-size:21.5px;color:#222222;transform:scaleX(0.9924);">ad hoc route on 05/05/2025</div>
<div class="t" style="left:1233.30px;top:520px;font-size:21.5px;color:#222222;transform:scaleX(1.0367);">5/5</div>
<div class="t" style="left:1419.87px;top:520px;font-size:21.5px;color:#222222;transform:scaleX(0.9274);">1 Delivery</div>
<div class="t" style="left:1736.10px;top:520px;font-size:21.5px;color:#222222;transform:scaleX(0.9539);">900 Gallons</div>
<div class="t" style="left:443.06px;top:761px;font-size:21.5px;color:#3a7fc0;transform:scaleX(1.0375);">Item</div>
<div class="t" style="left:1099.23px;top:761px;font-size:21.5px;color:#3a7fc0;transform:scaleX(0.9673);">System Inventory</div>
<div class="t" style="left:1544.25px;top:761px;font-size:21.5px;color:#3a7fc0;transform:scaleX(0.9550);">Driver Inventory</div>
<div class="t" style="left:444.10px;top:818px;font-size:21.5px;color:#222222;transform:scaleX(0.9574);">#2 High Sulfur Fuel Oil</div>
<div class="t" style="left:1099.23px;top:818px;font-size:21.5px;color:#222222;transform:scaleX(0.9703);">15885.2 Gallons</div>
<div class="t" style="left:1545.30px;top:809px;font-size:15.5px;color:#6b6b6b;transform:scaleX(0.9189);">Gallons</div>
<div class="t" style="left:1544.22px;top:841px;font-size:21.5px;color:#464646;transform:scaleX(0.9847);">15885</div>
<div class="t" style="left:443.13px;top:914px;font-size:21.5px;color:#222222;transform:scaleX(0.9688);">Propane</div>
<div class="t" style="left:1099.80px;top:914px;font-size:21.5px;color:#222222;transform:scaleX(0.9567);">-14083.5 Gallons</div>
<div class="t" style="left:1545.30px;top:905px;font-size:15.5px;color:#6b6b6b;transform:scaleX(0.9189);">Gallons</div>
<div class="t" style="left:1544.80px;top:937px;font-size:21.5px;color:#464646;transform:scaleX(0.9507);">-10933</div>
<div class="t" style="left:443.14px;top:1010px;font-size:21.5px;color:#222222;transform:scaleX(0.9558);">Premium Unleaded 92 Gas</div>
<div class="t" style="left:1099.80px;top:1010px;font-size:21.5px;color:#222222;transform:scaleX(0.9477);">-38.2 Gallons</div>
<div class="t" style="left:1545.30px;top:1001px;font-size:15.5px;color:#6b6b6b;transform:scaleX(0.9189);">Gallons</div>
<div class="t" style="left:1544.80px;top:1033px;font-size:21.5px;color:#464646;transform:scaleX(0.9097);">-38</div>
<div class="t" style="left:444.10px;top:1106px;font-size:21.5px;color:#222222;transform:scaleX(0.9340);">Clear K-1 Kerosene</div>
<div class="t" style="left:1099.14px;top:1106px;font-size:21.5px;color:#222222;transform:scaleX(0.9614);">706.4 Gallons</div>
<div class="t" style="left:1545.30px;top:1097px;font-size:15.5px;color:#6b6b6b;transform:scaleX(0.9189);">Gallons</div>
<div class="t" style="left:1543.81px;top:1129px;font-size:21.5px;color:#464646;transform:scaleX(0.9914);">706</div>
<div class="t" style="left:444.10px;top:1202px;font-size:21.5px;color:#222222;transform:scaleX(0.8957);">Clear ULSD</div>
<div class="t" style="left:1100.10px;top:1202px;font-size:21.5px;color:#222222;transform:scaleX(0.9496);">410 Gallons</div>
<div class="t" style="left:1545.30px;top:1193px;font-size:15.5px;color:#6b6b6b;transform:scaleX(0.9189);">Gallons</div>
<div class="t" style="left:1544.80px;top:1225px;font-size:21.5px;color:#464646;transform:scaleX(0.9639);">410</div>
<div class="t" style="left:443.20px;top:1298px;font-size:21.5px;color:#222222;transform:scaleX(0.9036);">Dyed ULSD</div>
<div class="t" style="left:1099.14px;top:1298px;font-size:21.5px;color:#222222;transform:scaleX(0.9614);">164.9 Gallons</div>
<div class="t" style="left:1545.30px;top:1289px;font-size:15.5px;color:#6b6b6b;transform:scaleX(0.9189);">Gallons</div>
<div class="t" style="left:1543.81px;top:1321px;font-size:21.5px;color:#464646;transform:scaleX(0.9914);">165</div>
<div class="t" style="left:445.80px;top:1394px;font-size:21.5px;color:#222222;transform:scaleX(0.9503);">#2 Heating Fuel</div>
<div class="t" style="left:1100.40px;top:1394px;font-size:21.5px;color:#222222;transform:scaleX(0.9572);">3583.1 Gallons</div>
<div class="t" style="left:1545.30px;top:1385px;font-size:15.5px;color:#6b6b6b;transform:scaleX(0.9189);">Gallons</div>
<div class="t" style="left:1545.20px;top:1417px;font-size:21.5px;color:#464646;transform:scaleX(0.9957);">3583</div>
<div class="a" style="left:0;top:1403px;width:2532px;height:91px;background:#fff;box-shadow:0 -2px 5px rgba(0,0,0,0.12);z-index:6"><div class="a" style="left:1039px;top:18px;width:446px;height:52px;border:2px solid #d0352d;border-radius:3px"></div></div><div style="position:absolute;z-index:7;left:0;top:0"><div class="t" style="left:1212.10px;top:1441px;font-size:21.5px;color:#d0352d;transform:scaleX(0.8991);">END SHIFT</div>
</div></div></body></html>
